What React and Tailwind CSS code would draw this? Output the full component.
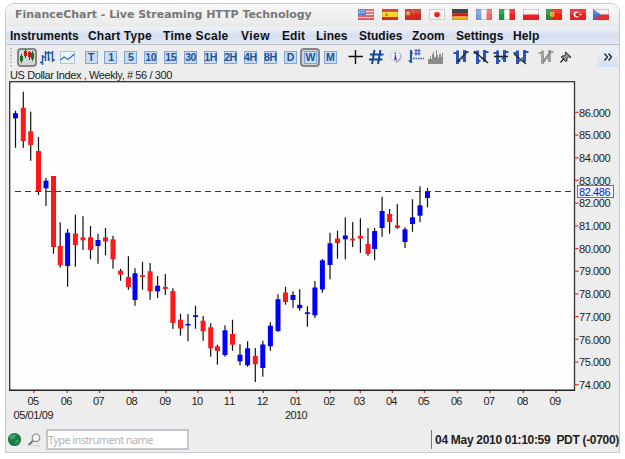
import React from 'react';

const MENU = [
  { label: 'Instruments', cls: 'w-[78px]', len: 'tracking-[0px]' },
  { label: 'Chart Type', cls: 'w-[75px]', len: 'tracking-[0.2px]' },
  { label: 'Time Scale', cls: 'w-[78px]', len: 'tracking-[0.3px]' },
  { label: 'View', cls: 'w-[41px]', len: 'tracking-[0.5px]' },
  { label: 'Edit', cls: 'w-[34px]', len: 'tracking-[0.1px]' },
  { label: 'Lines', cls: 'w-[43px]', len: 'tracking-[0px]' },
  { label: 'Studies', cls: 'w-[53px]', len: 'tracking-[0px]' },
  { label: 'Zoom', cls: 'w-[44px]', len: 'tracking-[0px]' },
  { label: 'Settings', cls: 'w-[57px]', len: 'tracking-[0px]' },
  { label: 'Help', cls: 'w-[40px]', len: 'tracking-[0.1px]' },
];

const PERIODS = ['T', '1', '5', '10', '15', '30', '1H', '2H', '4H', '8H', 'D', 'W', 'M'];

// x, high, low, body top, body bottom, up (1) or down (0)
const CANDLES = [
  [15.5, 110.7, 147.7, 113.3, 118.3, 1], [23.3, 91.7, 147.7, 107.7, 141, 0],
  [30.7, 111.7, 160.7, 131.3, 145, 0], [38.5, 137, 195, 151, 192, 0],
  [46, 178, 206, 180.7, 188.3, 1], [53.5, 176, 253.7, 176, 247, 0],
  [60.2, 222.3, 267.7, 246, 265.3, 0], [67.6, 229, 286.7, 232.7, 266, 1],
  [75.4, 214.7, 266.7, 233.5, 245, 0], [83, 216.3, 250, 237.3, 240.3, 0],
  [90.5, 226, 259.3, 237.3, 250, 0], [98, 233.7, 263.7, 240, 246, 1],
  [105.5, 228, 255.3, 237.3, 241.5, 0], [113, 236, 268.7, 239.3, 259.3, 0],
  [120.6, 268.7, 280.7, 270.7, 274.7, 0], [128.4, 256.3, 289.7, 277, 287, 0],
  [135, 268.3, 305.7, 273.3, 300, 1], [142.5, 261.7, 289.7, 275.3, 277, 0],
  [150.1, 263, 299.7, 271.3, 291.3, 0], [157.6, 276, 298, 285.7, 291.3, 1],
  [165.3, 274, 295, 286.9, 289, 0], [172.9, 288.3, 329, 291, 323, 0],
  [180.5, 313.7, 335.7, 319.7, 328.5, 0], [188, 314, 341.3, 323.9, 325.5, 1],
  [195.5, 305.7, 328.7, 315.2, 317, 1], [203.1, 316, 340.7, 320.7, 331.3, 0],
  [210.7, 323.3, 356.7, 327.3, 348.3, 0], [217.4, 344.7, 364.7, 346.3, 351, 0],
  [225, 325.3, 356.7, 330.3, 355, 1], [232.5, 319.7, 350.7, 334, 344.7, 0],
  [240, 344.3, 365.3, 354.7, 361.3, 1], [247.6, 341.3, 366.7, 348.3, 365.3, 1],
  [255.3, 348, 382, 355.9, 364.3, 0], [262.8, 340.7, 376.7, 344.5, 368, 1],
  [270.4, 322.3, 350.7, 325.7, 346.3, 1], [278, 294.3, 332, 299.2, 331, 1],
  [285.5, 286.7, 304.7, 292.5, 302, 0], [293, 291.3, 307.7, 295, 300, 1],
  [299.7, 289.3, 310.7, 304.8, 308.2, 1], [307.4, 306.3, 326.7, 312.3, 314, 1],
  [314.9, 281, 318, 287.5, 315.3, 1], [322.4, 259, 292.7, 260.3, 289.5, 1],
  [330, 232.7, 279.3, 243.3, 265, 1], [337.5, 230.7, 258.7, 238.5, 243, 0],
  [345.3, 217.3, 259.3, 235.5, 239.3, 1], [352.7, 222, 247, 238.6, 240.5, 0],
  [360.4, 218.3, 252.7, 235.9, 238.5, 0], [368, 228, 255.7, 244, 254, 0],
  [374.6, 228, 260.3, 231, 249, 1], [382.1, 196.7, 236.7, 211, 228, 1],
  [389.6, 209, 233.7, 214, 222, 0], [397.3, 204, 228.7, 225.2, 228, 0],
  [405, 227.3, 248, 229.3, 242, 1], [412.5, 199.3, 231.7, 217.3, 224, 1],
  [420, 186.3, 222.3, 205.3, 215.7, 1], [427.5, 188, 207.3, 191.5, 198, 1],
];

const MONTHS = [
  ['05', 34], ['06', 67.3], ['07', 99.5], ['08', 132.5], ['09', 166], ['10', 198],
  ['11', 230.3], ['12', 263.3], ['01', 296.5], ['02', 330], ['03', 360.3], ['04', 392.4],
  ['05', 424.5], ['06', 457.4], ['07', 490], ['08', 523.4], ['09', 556],
];

const PRICES = [86, 85, 84, 83, 82, 81, 80, 79, 78, 77, 76, 75, 74];

function Flag({ children }) {
  return (
    <svg width="16" height="11" viewBox="0 0 16 11" className="block">
      {children}
      <path d="M0 0H16V5Q8 3 0 6Z" fill="#fff" opacity="0.16" />
      <rect x="0.5" y="0.5" width="15" height="10" fill="none" stroke="#555" strokeOpacity="0.25" />
    </svg>
  );
}

function Flags() {
  return (
    <div className="mb-[3px] flex w-[251px] justify-between">
      <Flag>
        <rect width="16" height="11" fill="#f4e4e6" />
        <path d="M0 1H16M0 4H16M0 7H16M0 10H16" stroke="#e8343c" strokeWidth="1.3" />
        <rect width="8" height="6" fill="#4a7fd0" />
        <path d="M1 1.5H7M1 3.5H7" stroke="#cfe0fa" strokeWidth="0.8" strokeDasharray="1 1" />
      </Flag>
      <Flag>
        <rect width="16" height="11" fill="#e8201c" />
        <rect y="3" width="16" height="5" fill="#fcd81c" />
        <rect x="3" y="4" width="3" height="3" fill="#e08a28" />
      </Flag>
      <Flag>
        <rect width="16" height="11" fill="#cf2a1c" />
        <path d="M3 1.5L4 3.5H6L4.5 4.8L5 7L3 5.7L1.3 7L1.8 4.8L0.5 3.5H2.4Z" fill="#f2a03c" />
        <path d="M7 1.5H8M8.5 3.5H9.5M8 5.5H9" stroke="#f2a03c" />
      </Flag>
      <Flag>
        <rect width="16" height="11" fill="#f8f4f4" />
        <circle cx="8" cy="5.5" r="2.8" fill="#f01c1c" />
      </Flag>
      <Flag>
        <rect width="16" height="4" fill="#222" />
        <rect y="4" width="16" height="3.5" fill="#d81c14" />
        <rect y="7.5" width="16" height="3.5" fill="#f2b01c" />
      </Flag>
      <Flag>
        <rect width="5.5" height="11" fill="#7c9ce4" />
        <rect x="5.5" width="5" height="11" fill="#f4f4fa" />
        <rect x="10.5" width="5.5" height="11" fill="#f06c6c" />
      </Flag>
      <Flag>
        <rect width="5.5" height="11" fill="#149a3c" />
        <rect x="5.5" width="5" height="11" fill="#fafafa" />
        <rect x="10.5" width="5.5" height="11" fill="#f01c1c" />
      </Flag>
      <Flag>
        <rect width="16" height="5.5" fill="#f6f2f2" />
        <rect y="5.5" width="16" height="5.5" fill="#ee1c24" />
      </Flag>
      <Flag>
        <rect width="6" height="11" fill="#2c8a34" />
        <rect x="6" width="10" height="11" fill="#ee2018" />
        <circle cx="6.2" cy="5.5" r="2.4" fill="#e8cc2c" />
        <circle cx="6.2" cy="5.5" r="1.1" fill="#e05a28" />
      </Flag>
      <Flag>
        <rect width="16" height="11" fill="#f01c1c" />
        <circle cx="6.5" cy="5.5" r="2.9" fill="#fff" />
        <circle cx="7.4" cy="5.5" r="2.1" fill="#f01c1c" />
        <path d="M9 5.5L11.5 4.4V6.6Z" fill="#fff" />
      </Flag>
      <Flag>
        <rect width="16" height="5.5" fill="#f6f4f6" />
        <rect y="5.5" width="16" height="5.5" fill="#ee2a2a" />
        <path d="M0 0L8 5.5L0 11Z" fill="#3a78d0" />
      </Flag>
    </div>
  );
}

function Tool({ children, active }) {
  return (
    <div className="flex h-5 w-5 shrink-0 items-center justify-center">
      {active ? (
        <div className="flex h-[19px] w-5 shrink-0 items-center justify-center rounded-[4px] border-2 border-[#858585] bg-[#d5d5d3]">
          {children}
        </div>
      ) : children}
    </div>
  );
}

function Period({ label }) {
  return (
    <div className="flex h-[13px] w-[13px] shrink-0 items-center justify-center border border-[#7ba6e3] bg-[#c9dcf5] text-[10.5px] leading-[11px] font-bold tracking-[-0.4px] text-[#24518f]">
      {label}
    </div>
  );
}

function CandleIcon() {
  return (
    <svg width="16" height="16" viewBox="0 0 16 16" className="block shrink-0">
      <path d="M2.5 5V14M13.5 2V12" stroke="#16702c" />
      <path d="M6.5 0V9M10.5 2V11" stroke="#901c14" />
      <path d="M1 7H4V12H1ZM12 4H15V10H12Z" fill="#16702c" />
      <path d="M5 2H8V7H5ZM9 3H12V8H9Z" fill="#b82018" />
    </svg>
  );
}

// Two OHLC bars, shared by the line-drawing tools
function Bars({ color = '#2a55b4', children }) {
  return (
    <svg width="16" height="16" viewBox="0 0 16 16" className="block">
      <path d="M4.5 1.5V15M11.5 1V13" stroke={color} strokeWidth="3" />
      <path d="M0.5 4H4M4 12H7.5M8.5 9.5H12M12 3H15.5" stroke={color} strokeWidth="2" />
      {children}
    </svg>
  );
}

function Toolbar() {
  return (
    <div className="flex h-[24px] items-center pl-[4px]">
      <svg width="2" height="19" viewBox="0 0 2 19" className="mr-[5px]">
        <path d="M1 0V19" stroke="#a5a5a5" strokeWidth="1.4" strokeDasharray="1.4 2" />
      </svg>
      <Tool active><CandleIcon /></Tool>
      <Tool>
        <svg width="15" height="15" viewBox="0 0 15 15">
          <path d="M2.5 5V15M0 12.5H2.5M2.5 7H5M5.5 1V11M5.5 3H8M8 9H10M8.5 1V11M8.5 3H11M12.5 1V12M10 3H12.5M12.5 10H15" stroke="#2858b4" strokeWidth="1.5" fill="none" />
        </svg>
      </Tool>
      <Tool>
        <svg width="15" height="13" viewBox="0 0 15 13">
          <rect x="0.5" y="0.5" width="14" height="12" fill="#edf3fb" stroke="#a9c6ec" />
          <path d="M0.5 9L4 6L8 8.5L14.5 3" stroke="#3975bd" strokeWidth="1.4" fill="none" />
        </svg>
      </Tool>
      <div className="ml-[4px] flex w-[259px] justify-between">
        {PERIODS.map(p => (
          <div key={p} className="flex w-[19.9px] shrink-0"><Tool active={p === 'W'}><Period label={p} /></Tool></div>
        ))}
      </div>
      <div className="ml-[6px] flex">
        <Tool>
          <svg width="16" height="16" viewBox="0 0 16 16"><path d="M7.5 1V15M0.5 7.5H15" stroke="#111" strokeWidth="1.4" /></svg>
        </Tool>
        <Tool>
          <svg width="16" height="16" viewBox="0 0 16 16"><path d="M6.5 1L4 15M12.5 1L10 15M2 5.5H15.5M1 10.5H14.5" stroke="#124a94" strokeWidth="2" /></svg>
        </Tool>
        <Tool>
          <svg width="14" height="14" viewBox="0 0 14 14">
            <circle cx="7.5" cy="6.8" r="5" fill="#aaa" />
            <path d="M6 10L7.5 13L10 10Z" fill="#999" />
            <circle cx="6.4" cy="6" r="4.8" fill="#f3f3f8" stroke="#c4c4c9" strokeWidth="0.7" />
            <path d="M6.4 2.8V4.3M6.4 5.2V9M5.2 9H7.8" stroke="#202cd0" strokeWidth="1.5" />
          </svg>
        </Tool>
        <Tool>
          <svg width="16" height="16" viewBox="0 0 16 16">
            <path d="M3 1V14" stroke="#2a55b4" strokeWidth="2.2" />
            <path d="M0.5 12H3M3 4H5" stroke="#2a55b4" strokeWidth="1.6" />
            <path d="M8 0V6.5M11 0V6.5M6.5 1.8H12.5M6.5 4.8H12.5" stroke="#2a55b4" strokeWidth="1.1" />
            <path d="M5 9.5H16" stroke="#2a55b4" strokeWidth="1.5" strokeDasharray="1.5 1" />
          </svg>
        </Tool>
        <Tool>
          <svg width="16" height="16" viewBox="0 0 16 16">
            <path d="M0 15V10H2V7H3V10H4V5H5V3H6V8H8V1H9V6H10V9H11V5H13V8H14V4H15V15Z" fill="#8b8b8b" />
          </svg>
        </Tool>
      </div>
      <div className="ml-[5px] flex">
        <Tool><Bars><path d="M4 13L14 3" stroke="#222" strokeWidth="1.3" /></Bars></Tool>
        <Tool><Bars><path d="M1 2L15 14" stroke="#222" strokeWidth="1.3" /></Bars></Tool>
        <Tool><Bars><path d="M1 7.5H15" stroke="#222" strokeWidth="1.5" /></Bars></Tool>
        <Tool><Bars><path d="M1 5L13 15" stroke="#222" strokeWidth="1.3" /></Bars></Tool>
      </div>
      <div className="ml-[5px] flex">
        <Tool><Bars color="#a0a0a0"><path d="M5 13L13 2" stroke="#808080" strokeWidth="1.5" /></Bars></Tool>
        <Tool>
          <svg width="12" height="12" viewBox="0 0 12 12">
            <path d="M5.5 1L11 6L9.5 6.5L8.5 5.8L6.8 7.2V10L5.5 10.5L1.5 6L2 5L5 4.8L6 3Z" fill="#9a9a9a" stroke="#222" strokeWidth="1" />
            <path d="M4 7.5L0.5 11.5" stroke="#222" strokeWidth="1.2" />
          </svg>
        </Tool>
      </div>
      <div className="mr-[1px] ml-auto flex h-[20px] w-[21px] items-center justify-center bg-gradient-to-b from-[#edf1fb] to-[#d5dff5]">
        <svg width="8" height="8" viewBox="0 0 8 8">
          <path d="M0.5 0.5L3.5 4L0.5 7.5M4.5 0.5L7.5 4L4.5 7.5" stroke="#222" strokeWidth="1.3" fill="none" />
        </svg>
      </div>
    </div>
  );
}

function Chart() {
  return (
    <svg width="613" height="343" viewBox="6 81 613 343" className="block shrink-0" fontFamily="'Liberation Sans', Arial, sans-serif" fontSize="11">
      <rect x="9.7" y="81.7" width="564.8" height="308.6" fill="#fefefe" stroke="#333" strokeWidth="1.3" />
      {CANDLES.map(([x, high, low, top, bottom, up]) => (
        <g key={x}>
          <path d={`M${x} ${high}V${low}`} stroke="#111" strokeWidth="1.2" />
          <rect x={x - 2.5} y={top} width="5" height={bottom - top} fill={up ? '#0000ff' : '#ff1818'} />
        </g>
      ))}
      <path d="M15 191.5H572" stroke="#2020e8" strokeWidth="1" strokeDasharray="6 4" />
      {PRICES.map((p, i) => (
        <g key={p}>
          <path d={`M574.5 ${112.4 + i * 22.69}H578.5`} stroke="#f03030" strokeWidth="1.2" />
          <text x="579" y={116.6 + i * 22.69} textLength="31.5" fill="#222">{p}.000</text>
        </g>
      ))}
      <rect x="577.5" y="185.5" width="36" height="12" fill="#f6f6f6" stroke="#f03c3c" />
      <text x="579" y="196" textLength="31.5" fill="#1111ee">82.486</text>
      {MONTHS.map(([m, x]) => (
        <g key={x}>
          <path d={`M${x} 390.5V393`} stroke="#f03030" strokeWidth="1.4" />
          <text x={x - 6.5} y="404.5" textLength="11.5" fill="#222">{m}</text>
        </g>
      ))}
      <path d="M9 390.3H575" stroke="#222" strokeWidth="1.2" />
      <text x="13.5" y="418.5" textLength="40" fill="#222">05/01/09</text>
      <text x="285" y="418.5" textLength="22.5" fill="#222">2010</text>
    </svg>
  );
}

function StatusBar() {
  return (
    <div className="mt-[2px] flex h-[27px] items-center pl-[1px]">
      <svg width="15" height="15" viewBox="0 0 15 15">
        <circle cx="7.5" cy="7.5" r="6.6" fill="#1c7c44" />
        <path d="M2.5 5Q5 1.5 9 3Q7 5 8 7Q5 6 4 8Z" fill="#45a46a" />
        <path d="M8 9L12 7L11 11L8 12Z" fill="#399a5c" />
      </svg>
      <svg width="14" height="14" viewBox="0 0 14 14" className="ml-[5px]">
        <circle cx="9" cy="4.8" r="3.8" fill="#f2f2f4" stroke="#8c8c8c" strokeWidth="1.2" />
        <path d="M6 7.8L1.5 12" stroke="#777" strokeWidth="2" />
        <path d="M4 12.7H13" stroke="#d0d0d0" />
      </svg>
      <div className="ml-[5px] h-[21px] w-[143px] border-2 border-[#c5c5cd] bg-white text-[11px] leading-[17px] text-[#b5b5b5]">
        <span className="font-['Noto_Sans',sans-serif] tracking-[-0.62px] whitespace-nowrap">Type instrument name</span>
      </div>
      <div className="ml-auto flex h-[19px] items-center border-l border-[#777] pl-[3px] text-[12px] font-bold tracking-[-0.31px] whitespace-pre text-[#222]">
        04 May 2010 01:10:59  PDT (-0700)
      </div>
    </div>
  );
}

export default function App() {
  return (
    <div className="h-[459px] w-[625px] overflow-hidden bg-white pt-[3px] pl-[5px] font-['Liberation_Sans',Arial,sans-serif]">
      <div className="h-[450px] w-[615px] overflow-hidden rounded-t-[9px] border border-[#c9c9cc] bg-[#ededed]">
        <div className="flex h-[23px] items-center justify-between bg-gradient-to-b from-[#f8f8f8] to-[#e9e9e9] pr-[10px] pl-[9px]">
          <div className="font-['DejaVu_Sans',Verdana,sans-serif] text-[11px] font-bold tracking-[-0.03px] whitespace-nowrap text-[#777]">
            FinanceChart - Live Streaming HTTP Technology
          </div>
          <Flags />
        </div>
        <div className="flex h-[18px] items-center border-b border-[#b9c1d0] bg-gradient-to-b from-[#f1f3f9] via-[#d5def0] to-[#e4e9f4] pl-[4px] text-[12px] font-bold text-[#111]">
          {MENU.map(m => (
            <span key={m.label} className={`${m.cls} ${m.len} shrink-0 whitespace-nowrap`}>{m.label}</span>
          ))}
        </div>
        <Toolbar />
        <div className="h-[12px] pl-[4px] text-[11px] leading-[13px] tracking-[-0.4px] whitespace-pre text-[#222]">US Dollar Index , Weekly, # 56 / 300</div>
        <Chart />
        <StatusBar />
      </div>
    </div>
  );
}
